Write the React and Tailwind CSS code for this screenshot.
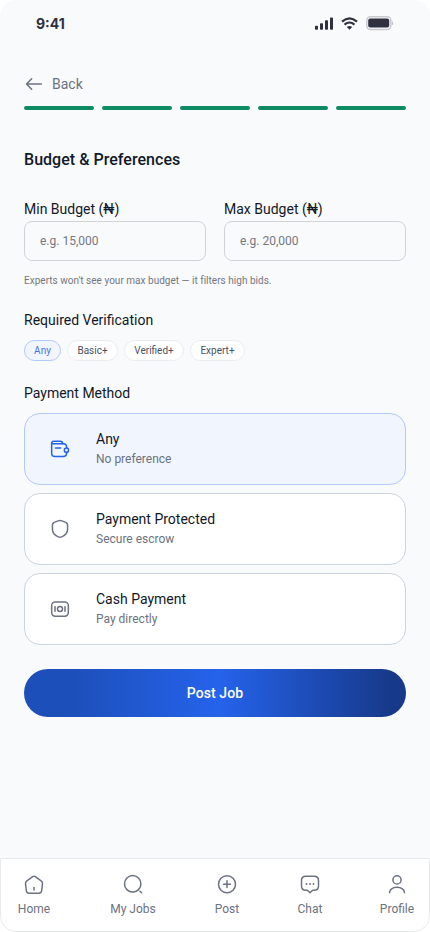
import React from "react";

function Icon({ children, size = 24, stroke = 1.5, className = "" }) {
  return (
    <svg width={size} height={size} viewBox="0 0 24 24" fill="none" stroke="currentColor" strokeWidth={stroke} strokeLinecap="round" strokeLinejoin="round" className={"shrink-0 " + className}>
      {children}
    </svg>
  );
}

function StatusBar() {
  return (
    <div className="flex h-12 items-center justify-between pl-9 pr-9 text-[#2f3140]">
      <span className="font-['Inter',sans-serif] text-[14px] leading-5 font-bold">9:41</span>
      <svg width="80" height="16" viewBox="0 0 80 16" fill="none">
        <g fill="currentColor">
          <rect x="1" y="9.7" width="3" height="4" rx="0.8" />
          <rect x="6" y="7.2" width="3" height="6.5" rx="0.8" />
          <rect x="11" y="4.2" width="3" height="9.5" rx="0.8" />
          <rect x="16" y="1.6" width="3" height="12.1" rx="0.8" />
          <path d="M32.8 11 L35.5 13.8 L38.2 11 Q35.5 9 32.8 11Z" />
        </g>
        <path d="M28 5.6 Q35.5 -1 43 5.6M30.5 8.6 Q35.5 4.4 40.5 8.6" stroke="currentColor" strokeWidth="2.1" />
        <rect x="52.8" y="0.8" width="24" height="12.6" rx="3.6" stroke="#c8cad0" strokeWidth="1.5" />
        <rect x="54.2" y="2.6" width="21" height="9" rx="2" fill="currentColor" />
        <path d="M78.3 5.5 Q79.5 7.2 78.3 9Z" fill="#b3b5bb" stroke="#b3b5bb" strokeWidth="0.5" />
      </svg>
    </div>
  );
}

function Field({ label, placeholder }) {
  return (
    <label className="flex w-[182px] flex-col">
      <span className="text-sm text-[#111827]">{label}</span>
      <input placeholder={placeholder} className="mt-0.5 h-10 w-full rounded-lg border border-[#d1d3d9] bg-[#f9fafc] px-[15px] text-xs outline-none placeholder:text-[#747782]" />
    </label>
  );
}

function Chip({ children, active, width }) {
  return (
    <button className={`flex h-[21px] items-center justify-center rounded-full border text-[10px] leading-3 ${width} ${active ? "border-[#b2c8f8] bg-[#f1f5fe] text-[#4675e8]" : "border-[#eaecf0] bg-white text-[#4b5060]"}`}>
      {children}
    </button>
  );
}

function Option({ icon, title, subtitle, active }) {
  return (
    <button className={`flex h-[72px] items-center rounded-2xl border pl-[25px] text-left ${active ? "border-[#b3caf8] bg-[#f1f5fe]" : "border-[#cbd4e1] bg-white"}`}>
      <Icon size={20} stroke={1.8} className={active ? "text-[#2563eb]" : "text-[#6b7280]"}>{icon}</Icon>
      <span className="ml-[26px] flex flex-col pb-0.5">
        <span className="text-sm text-[#111827]">{title}</span>
        <span className="mt-px text-xs leading-[18px] text-[#6b7280]">{subtitle}</span>
      </span>
    </button>
  );
}

function NavItem({ icon, label, place }) {
  return (
    <a className={`flex flex-col items-center gap-[5px] whitespace-nowrap ${place}`}>
      <Icon>{icon}</Icon>
      <span className="text-xs">{label}</span>
    </a>
  );
}

export default function App() {
  return (
    <div className="h-[932px] w-[430px] bg-white font-[Roboto,sans-serif]">
      <div className="flex h-full flex-col overflow-hidden rounded-2xl bg-[#f9fafc]">
        <StatusBar />
        <main className="flex flex-1 flex-col px-6">
          <button className="mt-6 flex h-6 items-center gap-2 text-sm text-[#6b7280]">
            <Icon size={20} stroke={1.8}><path d="M20.8 12H3M9.2 5.8L3 12l6.2 6.2" /></Icon>
            Back
          </button>
          <div className="mt-[10px] flex gap-2">
            {[0, 1, 2, 3, 4].map((i) => <span key={i} className="h-1 flex-1 rounded-full bg-[#0f8b62]" />)}
          </div>
          <h1 className="mt-[38px] text-base leading-6 font-medium tracking-[0.03px] text-[#111827]">Budget &amp; Preferences</h1>
          <div className="mt-[27px] flex justify-between">
            <Field label="Min Budget (₦)" placeholder="e.g. 15,000" />
            <Field label="Max Budget (₦)" placeholder="e.g. 20,000" />
          </div>
          <p className="mt-3 text-[10px] leading-4 tracking-[0.02px] text-[#747782]">Experts won't see your max budget — it filters high bids.</p>
          <h2 className="mt-[21px] text-sm text-[#111827]">Required Verification</h2>
          <div className="mt-[10px] flex gap-1.5">
            <Chip active width="w-[37px]">Any</Chip>
            <Chip width="w-[51px]">Basic+</Chip>
            <Chip width="w-[60px]">Verified+</Chip>
            <Chip width="w-[55px]">Expert+</Chip>
          </div>
          <h2 className="mt-[22px] text-sm text-[#111827]">Payment Method</h2>
          <div className="mt-[10px] flex flex-col gap-2">
            <Option active title="Any" subtitle="No preference" icon={<><path d="M20 10.5V10c0-2.8-1.5-4.2-4.2-4.2H4.4C3 5.8 2 5.2 2 4.8V17c0 2.6 1.3 3.9 3.9 3.9h9.9c2.5 0 4-1.2 4.2-4" /><path d="M2 5c0-1.4 1-2.2 2.4-2.2h7.8c2 0 3 1 3 2.8M6.5 10.9h6.2" /><circle cx="19.7" cy="13.4" r="2.5" /></>} />
            <Option title="Payment Protected" subtitle="Secure escrow" icon={<path d="M9.8 2.3 5 4.1C3.5 4.6 2.9 5.5 2.9 7v5c0 5 3.6 8 7 9.4q2.1.9 4.2 0c3.4-1.4 7-4.4 7-9.4V7c0-1.5-.6-2.4-2.1-2.9l-4.8-1.8q-2.2-.8-4.4 0Z" />} />
            <Option title="Cash Payment" subtitle="Pay directly" icon={<><rect x="2" y="3.6" width="20" height="17" rx="4.3" /><circle cx="12" cy="12" r="3" /><path d="M6 9.4v5.2M18 9.4v5.2" /></>} />
          </div>
          <button className="mt-6 h-12 rounded-full bg-[linear-gradient(90deg,#1d4fba_0%,#1d4fba_12%,#2563eb_51%,#17398a_96%,#17398a_100%)] text-sm font-medium tracking-[0.1px] text-white">Post Job</button>
        </main>
        <nav className="flex h-[74px] items-start rounded-b-2xl border border-[#e8eaee] bg-white pt-[13px] pl-[17px] text-[#6b7280]">
          <NavItem place="w-8" label="Home" icon={<><path d="M10.7 4.7q1.3-.8 2.6 0l5.8 4.1q1.6 1.1 1.4 2.8l-.8 6.9c-.2 1.8-.9 2.7-2.8 2.7H7.1c-1.9 0-2.6-.9-2.8-2.7l-.8-6.9q-.2-1.7 1.4-2.8Z" /><path d="M12 15.5v2.5" /></>} />
          <NavItem place="ml-[60px] w-[46px]" label="My Jobs" icon={<><circle cx="11.7" cy="11.8" r="8.2" /><path d="m19 19.2 1.6 1.6" /></>} />
          <NavItem place="ml-[59px] w-6" label="Post" icon={<><circle cx="12" cy="12.2" r="8.5" /><path d="M8.6 12.2h6.8M12 8.8v6.8" /></>} />
          <NavItem place="ml-[58px] w-[26px]" label="Chat" icon={<><path d="M7.8 4.2h8.4c2.8 0 4.3 1.5 4.3 4.3v5.4c0 2.8-1.5 4.2-4.3 4.3h-1c-.8 0-1.1.3-1.5.8L12 20.8 10.3 19c-.4-.5-.7-.8-1.5-.8h-1c-2.8-.1-4.3-1.5-4.3-4.3V8.5c0-2.8 1.5-4.3 4.3-4.3Z" /><path d="M8.5 12h.01M12 12h.01M15.5 12h.01" strokeWidth="1.9" /></>} />
          <NavItem place="ml-[57px] w-[34px]" label="Profile" icon={<><circle cx="12" cy="7.9" r="4.1" /><path d="M4.5 20.7c0-3 3.1-5.4 7.5-5.4s7.5 2.4 7.5 5.4" /></>} />
        </nav>
      </div>
    </div>
  );
}
